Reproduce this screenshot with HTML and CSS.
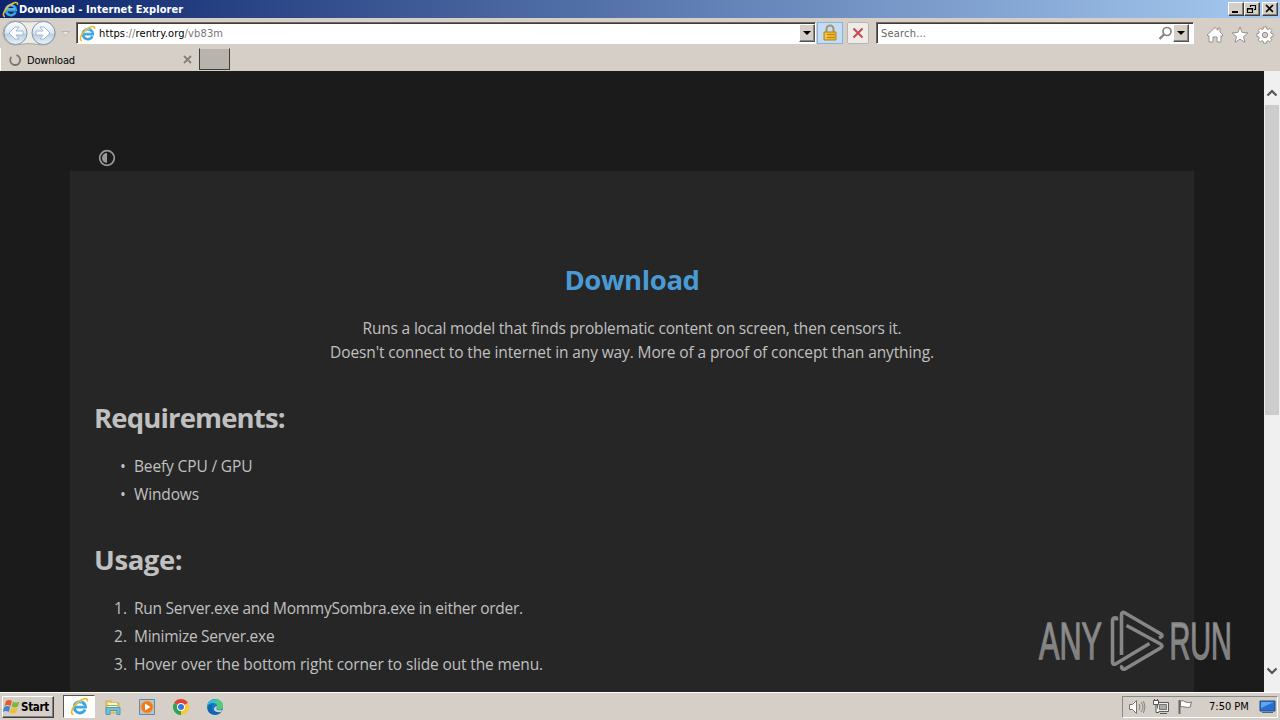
FILE: index.html
```html
<!DOCTYPE html>
<html lang="en">
<head>
    <meta charset="UTF-8" />
    <title>Download</title>
    <link rel="stylesheet" href="styles.css">
</head>
<body>

    <svg class="defs" width="0" height="0">
        <defs>
            <linearGradient id="navball" x1="0" y1="0" x2="0" y2="1">
                <stop offset="0" stop-color="#fdfeff" />
                <stop offset=".5" stop-color="#dbe7f1" />
                <stop offset=".55" stop-color="#b9cfe1" />
                <stop offset="1" stop-color="#e8f6ff" />
            </linearGradient>
            <linearGradient id="mark" x1="0" y1="0" x2="0" y2="1">
                <stop offset="0" stop-color="#999" />
                <stop offset="1" stop-color="#757575" />
            </linearGradient>
            <symbol id="ie" viewBox="0 0 18 18">
                <path d="M14.2 11.8A5.3 5.3 0 1 1 14.6 9.600H5" fill="none" stroke="#3ba5e4" stroke-width="2.800" />
                <path d="M5 8.200h8.500" stroke="#bfe7fb" stroke-width=".8" />
                <path d="M5.500 5.500q3-2.500 6-.5" fill="none" stroke="#8fd6f7" />
                <path d="M3.200 16.600C-.4 16 2 9.500 7.500 5 12 1.200 17.500 0 16.400 4.300" fill="none" stroke="#e9bd2e" stroke-width="1.700" />
            </symbol>
        </defs>
    </svg>

    <header class="titlebar">
        <svg class="title-icon" width="17" height="17"><use href="#ie" /></svg>
        <span class="title">Download - Internet Explorer</span>
        <div class="winbuttons">
            <button><svg width="12" height="10"><path d="M2 8h6" stroke="#000" stroke-width="2" /></svg></button>
            <button><svg width="12" height="10"><path d="M4.500 3V1.500h5v4H8M4 1.500h6M1.500 4.500h5v4h-5zM1 5h6" fill="none" stroke="#000" stroke-width="1.200" /></svg></button>
            <button class="close"><svg width="12" height="10"><path d="M2 1l7 7M9 1L2 8" stroke="#000" stroke-width="1.700" /></svg></button>
        </div>
    </header>

    <nav class="navbar">
        <svg class="arrows" width="74" height="30" viewBox="0 0 74 30">
            <path d="M15 3Q29 5 43 3A12 12 0 0 1 43 27Q29 24 15 27A12 12 0 0 1 15 3" fill="#eeece9" stroke="#aaa7a2" />
            <circle cx="15.500" cy="15" r="11.500" fill="url(#navball)" stroke="#8795a2" />
            <circle cx="43.500" cy="15" r="11.500" fill="url(#navball)" stroke="#8795a2" />
            <path d="M23 13v4h-7l3 4h-4l-6-6 6-6h4l-3 4z" fill="#fff" stroke="#a2b9cc" />
            <path d="M36 13v4h7l-3 4h4l6-6-6-6h-4l3 4z" fill="#fff" stroke="#a2b9cc" />
            <path d="M61.500 13.500h8l-4 4z" fill="#e9e6e2" stroke="#b8b4af" />
        </svg>
        <div class="address">
            <svg width="17" height="17"><use href="#ie" /></svg>
            <span class="url">https<i>://</i>rentry.org<i>/vb83m</i></span>
            <b class="drop"></b>
        </div>
        <div class="tool lock">
            <svg width="16" height="18" viewBox="0 0 16 18">
                <path d="M4.500 9V5a3.500 3.500 0 0 1 7 0v4" fill="none" stroke="#a49463" stroke-width="2" />
                <path d="M2 8h12v8H2z" fill="#e9b62c" stroke="#b78413" />
                <path d="M3 10.500h10M3 13.500h10" stroke="#b98a1c" />
                <path d="M4 9v6" stroke="#ffe287" />
            </svg>
        </div>
        <div class="tool stop">
            <svg width="14" height="14" viewBox="0 0 14 14"><path d="M2.500 2.500l9 9M11.500 2.500l-9 9" stroke="#c54950" stroke-width="2" /></svg>
        </div>
        <div class="search">
            <span>Search...</span>
            <svg width="14" height="15" viewBox="0 0 14 15"><circle cx="9" cy="5.500" r="4" fill="none" stroke="#858585" stroke-width="1.700" /><path d="M6 8.500L1.500 13" stroke="#858585" stroke-width="2.400" /></svg>
            <b class="drop"></b>
        </div>
        <div class="commands">
            <svg width="18" height="18" viewBox="0 0 18 18"><path d="M1 9L9 1.500l3 2.800V2h2v4l3 3-1.200 1.300L15 9.500V16h-4v-5H7v5H3V9.500l-.8.800z" fill="#fff" stroke="#96938e" /></svg>
            <svg width="18" height="18" viewBox="0 0 18 18"><path d="M9 1l2.200 5.500 5.800.400-4.500 3.700 1.500 5.700L9 13.200l-5 3.100 1.500-5.700L1 6.900l5.800-.4z" fill="#fff" stroke="#96938e" /></svg>
            <svg width="18" height="18" viewBox="0 0 18 18">
                <path d="M7.500 1h3l.4 2 1.300.6L14 2.400 15.900 4.500 14.600 6l.5 1.400 2 .3v2.800l-2 .4-.6 1.300 1.200 1.700-2 2-1.700-1.200-1.300.600-.4 1.900H7.600l-.4-1.900-1.300-.6-1.700 1.200-2-2 1.200-1.700-.6-1.300-1.900-.4V7.700l1.900-.4L3.400 6 2.200 4.300l2-2 1.700 1.200L7.200 3z" fill="#fff" stroke="#96938e" />
                <circle cx="9" cy="9" r="2.700" fill="#d5cfc8" stroke="#96938e" />
            </svg>
        </div>
    </nav>

    <div class="tabs">
        <div class="tab">
            <svg width="14" height="14" viewBox="0 0 14 14"><path d="M8.500 2.200A5 5 0 1 1 3.300 3.800" fill="none" stroke="#777" stroke-width="1.800" /></svg>
            <span>Download</span>
            <svg class="tab-close" width="9" height="9"><path d="M1 1l7 7M8 1L1 8" stroke="#858079" stroke-width="1.800" /></svg>
        </div>
        <div class="newtab"></div>
    </div>

    <div class="view">
        <main class="page">
            <div class="theme">
                <svg width="18" height="18" viewBox="0 0 18 18"><circle cx="9" cy="9" r="7.300" fill="none" stroke="#999" stroke-width="1.700" /><path d="M9 4a5 5 0 0 0 0 10z" fill="#999" /></svg>
            </div>
            <article class="paper">
                <h1>Download</h1>
                <p><span class="intro">Runs a local model that finds problematic content on screen, then censors it.</span><br />Doesn't connect to the internet in any way. More of a proof of concept than anything.</p>
                <h2 class="req">Requirements:</h2>
                <ul>
                    <li>Beefy CPU / GPU</li>
                    <li>Windows</li>
                </ul>
                <h2>Usage:</h2>
                <ol>
                    <li class="tight">Run Server.exe and MommySombra.exe in either order.</li>
                    <li class="tight">Minimize Server.exe</li>
                    <li>Hover over the bottom right corner to slide out the menu.</li>
                </ol>
            </article>
        </main>
        <aside class="scrollbar">
            <svg width="16" height="34" viewBox="0 0 16 34"><path d="M3.500 24.500L8 20l4.500 4.500" fill="none" stroke="#555" stroke-width="2.200" /></svg>
            <div class="thumb"></div>
            <svg class="down" width="16" height="34" viewBox="0 0 16 34"><path d="M3.500 10.500L8 15l4.500-4.500" fill="none" stroke="#555" stroke-width="2.200" /></svg>
        </aside>
        <svg class="watermark" width="229" height="80" viewBox="1035 605 229 80">
            <g fill="url(#mark)" stroke="#868686" stroke-width="1.300">
                <text transform="translate(1039 659) scale(.6 1)">ANY</text>
                <text transform="translate(1169.500 659) scale(.565 1)">RUN</text>
            </g>
            <g fill="none" stroke="#868686" stroke-width="3.600" stroke-linejoin="round">
                <path d="M1116.500 620.500v-2.500q-4-1-4 3v41q0 3 3 2l34-20.500" />
                <path d="M1121.500 655v-40q0-4 3.500-2l36 21q2 2 0 3l-2 1" />
                <path d="M1126.500 625.500l34 18.500q3 2 0 4L1125 669q-3 1-3.500-2l1-1.500" />
            </g>
        </svg>
    </div>

    <footer class="taskbar">
        <button class="start">
            <svg width="18" height="16" viewBox="0 0 18 16">
                <path d="M3 2q3-2 6 0L7.500 7q-3-2-6 0z" fill="#e9572d" />
                <path d="M10 2.500q3 2 6.500 0L15 7.500q-3 2-6.500 0z" fill="#80b63d" />
                <path d="M1.200 8q3-2 6 0L5.700 13q-3-2-6 0z" fill="#4185d2" />
                <path d="M8.200 8.500q3 2 6.500 0L13 13.500q-3 2-6.300 0z" fill="#f5bd30" />
            </svg>
            <span>Start</span>
        </button>
        <div class="apps">
            <div class="app active"><svg width="19" height="19"><use href="#ie" /></svg></div>
            <div class="app">
                <svg width="18" height="18" viewBox="0 0 18 18">
                    <path d="M2 3h5l1 2h7v10H2z" fill="#edcf72" stroke="#d1ac4d" />
                    <path d="M4 5h9v5H4z" fill="#fff5bd" />
                    <path d="M2 9.500h14v7h-3v-4H6v4H2z" fill="#71bdda" stroke="#4a9bbd" />
                    <path d="M3 7.500h11" stroke="#82b669" />
                </svg>
            </div>
            <div class="app">
                <svg width="18" height="18" viewBox="0 0 18 18">
                    <path d="M1.500 1.500h15v15h-15z" fill="#a9cbe2" stroke="#6589a4" />
                    <circle cx="9" cy="9" r="6.300" fill="#ed7c20" stroke="#f9b067" />
                    <path d="M7 5.500v7l5.500-3.500z" fill="#fff" />
                </svg>
            </div>
            <div class="app">
                <svg width="18" height="18" viewBox="0 0 18 18">
                    <path d="M9 9L2.070 5a8 8 0 0 1 13.860 0z" fill="#e44134" />
                    <path d="M9 9l6.930-4A8 8 0 0 1 9 17z" fill="#f9c934" />
                    <path d="M9 9v8A8 8 0 0 1 2.070 5z" fill="#31a451" />
                    <circle cx="9" cy="9" r="4" fill="#fff" />
                    <circle cx="9" cy="9" r="3" fill="#3879dc" />
                </svg>
            </div>
            <div class="app">
                <svg width="18" height="18" viewBox="0 0 18 18">
                    <circle cx="9" cy="9" r="8" fill="#1679c4" />
                    <path d="M1 9C1-1 17-1 17 8c0 4-6 4-6 2 1-3-1-5-4-5-3 0-6 2-6 4z" fill="#35bfd0" />
                    <path d="M11 1.500c4 1 6 4 6 7 0 4-6 4-6 1.500 1-3 0-5-2-5z" fill="#55cb79" />
                    <path d="M7 6c-3 3-1 9 6 8 2 0 2 0 2 .500C10 19 0 16 2 9c1-2 3-3 5-3z" fill="#1264b3" />
                    <path d="M10.500 8c1 2-.5 2 0 3 1 2 4 1 5.500 1l-1 2c-5 1-9-2-6-5z" fill="#d6d2ca" />
                </svg>
            </div>
        </div>
        <div class="tray">
            <svg width="18" height="18" viewBox="0 0 18 18"><path d="M1.500 6.500h3l4-4v13l-4-4h-3z" fill="#fff" stroke="#77736e" /><path d="M11 6q2 3 0 6M13 4q4 5 0 10M15.500 3q3 6 0 12" fill="none" stroke="#85817c" /></svg>
            <svg width="18" height="18" viewBox="0 0 18 18"><path d="M5.500 4.500h11v9h-11zM8 15.500h7" fill="#eee" stroke="#5e5b57" /><path d="M7.500 6.500h7v5h-7z" fill="#aaa" stroke="#777" /><path d="M1.500 2.500h5v4h-5zM2.500 1v2M5.500 1v2M4 6.500v8h3" fill="#fff" stroke="#555" /></svg>
            <svg width="18" height="18" viewBox="0 0 18 18"><path d="M3.500 2v14" stroke="#6c6965" stroke-width="2" /><path d="M4.500 3q3-1 5 1 3 1 6 0-1 2-1 5-3 1-6 0-2-1-4 0z" fill="#fff" stroke="#797570" /></svg>
            <time>7:50 PM</time>
            <svg class="desk" width="17" height="14" viewBox="0 0 17 14"><path d="M1 1h15v10H1z" fill="#286fd0" stroke="#244a79" /><path d="M2 2h13L2 8z" fill="#60a5ef" /><path d="M3 12.500h11" stroke="#426794" /></svg>
        </div>
    </footer>

</body>
</html>
```
FILE: styles.css
```css
*,
*::before,
*::after {
    box-sizing: border-box;
}
html,
body {
    padding: 0;
    margin: 0;
    height: 100%;
}
body {
    display: flex;
    flex-direction: column;
    overflow: hidden;
    background: #d5cfc8;
    color: #000;
    font-family: "DejaVu Sans Condensed", "DejaVu Sans", sans-serif;
    font-size: 11px;
}
svg {
    display: block;
    flex: none;
}
button {
    padding: 0;
    border: 1px solid;
    border-color: #fff #404040 #404040 #fff;
    box-shadow: inset -1px -1px #808080;
    background: #d5cfc8;
    font: inherit;
}
.defs {
    position: absolute;
}

/* window frame */
.titlebar {
    display: flex;
    align-items: center;
    height: 18px;
    padding: 0 2px;
    background: linear-gradient(90deg, #0b246b, #a6caf0);
    color: #fff;
}
.title {
    flex: 1;
    font-weight: bold;
    font-size: 11px;
    letter-spacing: .08px;
}
.winbuttons {
    display: flex;
}
.winbuttons button {
    width: 16px;
    height: 14px;
    padding: 1px;
}
.winbuttons .close {
    margin-left: 2px;
}
.navbar {
    display: flex;
    align-items: center;
    height: 30px;
}
.arrows {
    margin-right: 2px;
}
.address,
.search {
    display: flex;
    align-items: center;
    height: 22px;
    border: 1px solid;
    border-color: #716960 #fff #fff #716960;
    box-shadow: inset 1px 1px #403d38;
    background: #fff;
}
.address {
    width: 740px;
    padding-left: 2px;
}
.url {
    flex: 1;
    margin-left: 3px;
    padding-top: 1px;
    letter-spacing: .13px;
}
.url i {
    color: #777;
    font-style: normal;
}
.drop {
    display: flex;
    align-items: center;
    justify-content: center;
    width: 16px;
    height: 18px;
    border: 1px solid;
    border-color: #fff #555 #555 #fff;
    box-shadow: inset -1px -1px #888;
    background: #d5cfc8;
}
.drop::after {
    content: "";
    border: 4px solid transparent;
    border-top-color: #000;
    border-bottom: 0;
}
.tool {
    display: flex;
    align-items: center;
    justify-content: center;
    height: 22px;
}
.lock {
    width: 26px;
    margin-left: 1px;
    border: 1px solid #83b4e5;
    background: #c4ddf5;
}
.stop {
    width: 22px;
    margin-left: 4px;
    border: 1px solid #b9b5af;
    border-radius: 2px;
    background: #eeebe9;
}
.search {
    width: 318px;
    margin-left: 7px;
    padding: 0 4px;
    color: #666;
}
.search span {
    flex: 1;
    padding-top: 1px;
    letter-spacing: .2px;
}
.search .drop {
    margin-left: 1px;
}
.commands {
    display: flex;
    gap: 7px;
    margin: 3px 0 0 12px;
}
.tabs {
    display: flex;
    height: 23px;
}
.tab {
    display: flex;
    align-items: center;
    width: 199px;
    padding: 0 7px 0 7px;
    border-left: 1px solid #fff;
}
.tab span {
    flex: 1;
    margin-left: 5px;
    padding-top: 1px;
    letter-spacing: -.15px;
}
.newtab {
    width: 31px;
    height: 22px;
    border: 1px solid #3e3b38;
    border-top-color: #d5cfc8;
    background: #b9b3ae;
}

/* browser content */
.view {
    display: flex;
    position: relative;
    height: 621px;
    overflow: hidden;
    background: #1b1b1b;
}
.page {
    width: 1264px;
    padding: 78px 70px 0;
    color: #c0c0c0;
    font-family: "Open Sans", "Noto Sans", sans-serif;
    font-size: 15.500px;
}
.theme {
    height: 22px;
    padding-left: 28px;
}
.paper {
    height: 600px;
    padding: 90px 24px 0;
    background: #262626;
}
h1,
h2 {
    margin: 0;
    font-size: 27.500px;
    line-height: 38px;
    letter-spacing: -.4px;
}
h1 {
    color: #4a9bd5;
    text-align: center;
}
.req {
    letter-spacing: -.85px;
}
.paper p {
    margin: 17px 0 35px;
    line-height: 24px;
    text-align: center;
    letter-spacing: -.12px;
}
.intro {
    letter-spacing: -.18px;
}
ul,
ol {
    margin: 15px 0 33px;
    padding-left: 20px;
    list-style: none;
    counter-reset: step;
}
li {
    display: flex;
    line-height: 28px;
    letter-spacing: -.14px;
}
li::before {
    width: 20px;
    letter-spacing: 0;
}
ul li::before {
    content: "•";
    padding-left: 6px;
}
ol li::before {
    counter-increment: step;
    content: counter(step) ".";
}
.tight {
    letter-spacing: -.27px;
}
.scrollbar {
    display: flex;
    flex-direction: column;
    width: 16px;
    background: #f0f0f0;
}
.thumb {
    width: 14px;
    height: 310px;
    margin-left: 1px;
    background: #cdcdcd;
}
.down {
    margin-top: auto;
}
.watermark {
    position: absolute;
    left: 1035px;
    top: 534px;
}
.watermark text {
    font-family: "Liberation Sans", sans-serif;
    font-size: 51px;
}

/* taskbar */
.taskbar {
    display: flex;
    align-items: center;
    height: 28px;
    padding: 2px 2px 2px;
    border-top: 1px solid #fff;
}
.start {
    display: flex;
    align-items: center;
    width: 52px;
    height: 22px;
    font-size: 11.500px;
    font-weight: bold;
    letter-spacing: -.3px;
}
.apps {
    display: flex;
    gap: 2px;
    margin-left: 9px;
}
.app {
    display: flex;
    align-items: center;
    justify-content: center;
    width: 32px;
    height: 23px;
}
.active {
    border: 1px solid;
    border-color: #555 #fff #fff #555;
    background: #fff;
}
.tray {
    display: flex;
    align-items: center;
    gap: 6px;
    width: 156px;
    height: 22px;
    margin-left: auto;
    padding-left: 5px;
    border: 1px solid;
    border-color: #888 #fff #fff #888;
}
time {
    margin-left: 9px;
}
.desk {
    margin-left: 4px;
}
```
